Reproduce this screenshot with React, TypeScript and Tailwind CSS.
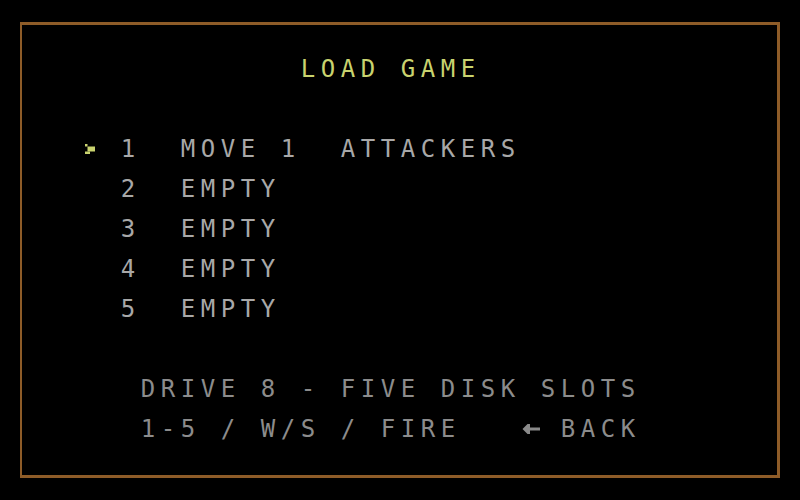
import React from "react";

function Cells({ text, color }: { text: string; color: string }) {
  return (
    <>
      {Array.from(text).map((ch, i) => (
        <span
          key={i}
          className={`inline-block w-[20px] text-center ${color}`}
        >
          {ch === " " ? "\u00a0" : ch}
        </span>
      ))}
    </>
  );
}

function Row({
  col,
  children,
  className = "",
}: {
  col: number;
  children: React.ReactNode;
  className?: string;
}) {
  return (
    <div
      className={`flex h-[20px] items-center whitespace-pre ${className}`}
      style={{ paddingLeft: col * 20 - 22 }}
    >
      {children}
    </div>
  );
}

function BackArrow() {
  return (
    <span className="inline-flex w-[20px] h-[20px] items-center justify-start translate-x-[2px]">
      <svg width="20" height="20" viewBox="0 0 20 20">
        <path
          d="M2.5 10 L7.5 5 L10 5 L10 8.5 L20 8.5 L20 11.5 L10 11.5 L10 15 L7.5 15 Z"
          fill="#8a8a8a"
        />
      </svg>
    </span>
  );
}

function Cursor() {
  return (
    <span className="inline-flex w-[20px] h-[20px] items-center translate-x-[2px]">
      <svg width="20" height="20" viewBox="0 0 20 20">
        <rect x="5" y="5" width="2.5" height="2.5" fill="#c9d36f" />
        <rect x="7.5" y="7.5" width="7.5" height="5" fill="#c9d36f" />
        <rect x="5" y="12.5" width="5" height="2.5" fill="#c9d36f" />
      </svg>
    </span>
  );
}

export default function App() {
  const menu = "text-[#a8a8a8]";
  const foot = "text-[#8c8c8c]";
  const title = "text-[#c9d36f]";
  return (
    <div
      className="w-[800px] h-[500px] bg-black pl-[20px] pt-[22px] overflow-hidden"
      style={{ fontFamily: '"DejaVu Sans Mono", "Liberation Mono", monospace' }}
    >
      <div className="w-[760px] h-[456px] border-l-2 border-r-[3px] border-t-[3px] border-b-[3px] border-[#8e5c28] flex flex-col text-[24px] leading-[20px]">
        <div className="-translate-x-[2px] -translate-y-[1px] flex flex-col">
          <Row col={15} className="mt-[35px]">
            <Cells text="LOAD GAME" color={title} />
          </Row>
          <Row col={4} className="mt-[60px]">
            <Cursor />
            <span className="inline-block w-[20px]" />
            <Cells text="1  MOVE 1  ATTACKERS" color={menu} />
          </Row>
          <Row col={6} className="mt-[20px]">
            <Cells text="2  EMPTY" color={menu} />
          </Row>
          <Row col={6} className="mt-[20px]">
            <Cells text="3  EMPTY" color={menu} />
          </Row>
          <Row col={6} className="mt-[20px]">
            <Cells text="4  EMPTY" color={menu} />
          </Row>
          <Row col={6} className="mt-[20px]">
            <Cells text="5  EMPTY" color={menu} />
          </Row>
          <Row col={7} className="mt-[60px]">
            <Cells text="DRIVE 8 - FIVE DISK SLOTS" color={foot} />
          </Row>
          <Row col={7} className="mt-[20px]">
            <Cells text="1-5 / W/S / FIRE   " color={foot} />
            <BackArrow />
            <Cells text=" BACK" color={foot} />
          </Row>
        </div>
      </div>
    </div>
  );
}
